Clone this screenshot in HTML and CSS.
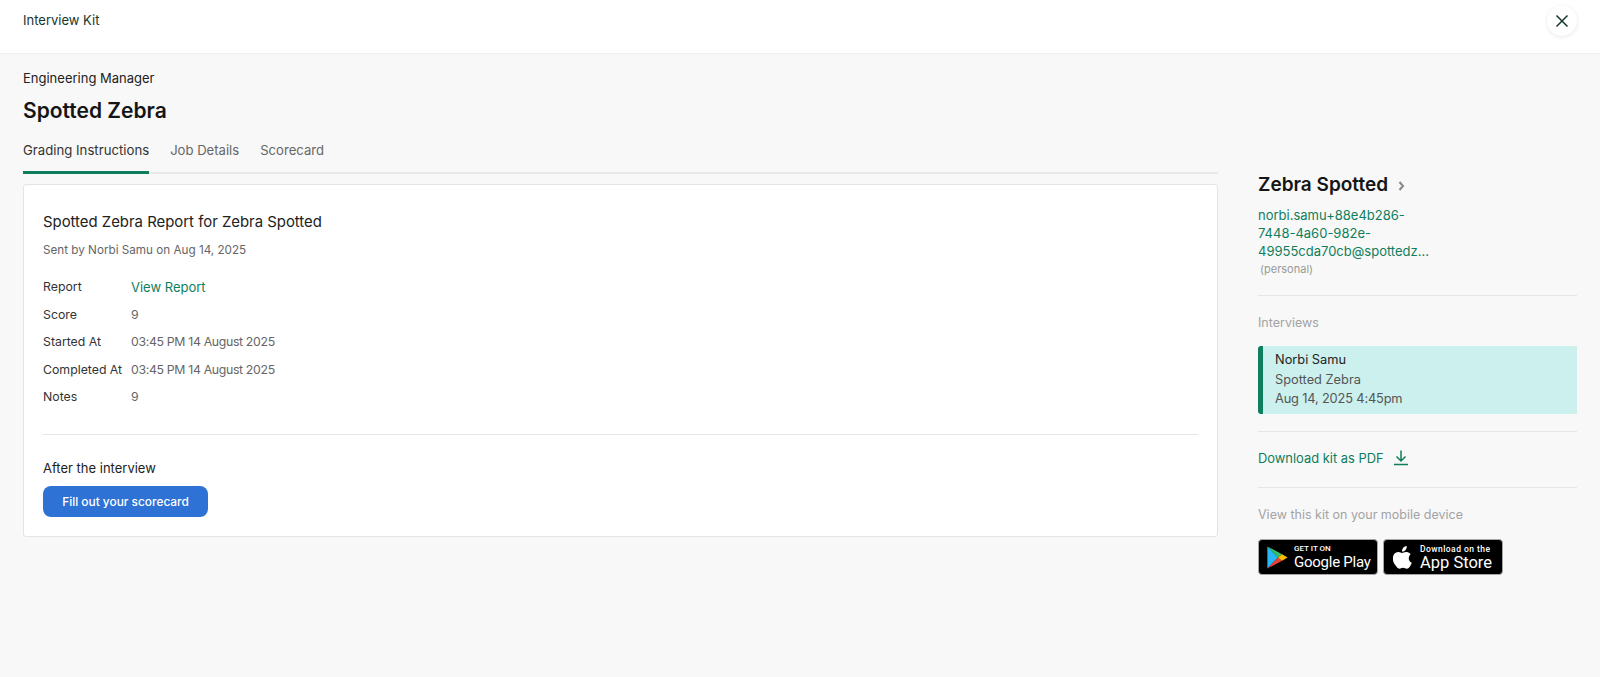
FILE: index.html
```html
<!DOCTYPE html>
<html>
<head>
   <title>Interview Kit</title>
   <link rel="stylesheet" href="styles.css">
</head>
<body>
   <header class="top-bar">
       <span class="top-title">Interview Kit</span>
       <button class="close-button" type="button" aria-label="Close">
           <svg width="14" height="14" viewBox="0 0 14 14"><path d="M1.5 1.5l11 11M12.5 1.5l-11 11" stroke="#15372c" stroke-width="1.5" fill="none"/></svg>
       </button>
   </header>
   <div class="page">
       <main class="main-col">
           <div class="job-name">Engineering Manager</div>
           <h1 class="candidate-title">Spotted Zebra</h1>
           <nav class="tabs">
               <a class="tab active">Grading Instructions</a>
               <a class="tab">Job Details</a>
               <a class="tab">Scorecard</a>
           </nav>
           <section class="card">
               <h2 class="card-title">Spotted Zebra Report for Zebra Spotted</h2>
               <p class="sent-by">Sent by Norbi Samu on Aug 14, 2025</p>
               <div class="report-grid">
                   <span class="report-label">Report</span><a class="report-value link">View Report</a>
                   <span class="report-label">Score</span><span class="report-value">9</span>
                   <span class="report-label">Started At</span><span class="report-value">03:45 PM 14 August 2025</span>
                   <span class="report-label">Completed At</span><span class="report-value">03:45 PM 14 August 2025</span>
                   <span class="report-label">Notes</span><span class="report-value">9</span>
               </div>
               <hr class="divider card-divider">
               <div class="after-label">After the interview</div>
               <button class="primary-button" type="button">Fill out your scorecard</button>
           </section>
       </main>
       <aside class="side-col">
           <div class="person-name">Zebra Spotted
               <svg class="chevron" width="7" height="10" viewBox="0 0 7 10"><path d="M1.5 1l3.500 4-3.500 4" stroke="#888" stroke-width="2" fill="none"/></svg>
           </div>
           <a class="person-email link">norbi.samu+88e4b286-<br>7448-4a60-982e-<br>49955cda70cb@spottedz...</a>
           <div class="email-type">(personal)</div>
           <hr class="divider side-divider-first">
           <div class="side-label interviews-label">Interviews</div>
           <div class="interview-item">
               <div class="interviewer">Norbi Samu</div>
               <div>Spotted Zebra</div>
               <div class="interview-date">Aug 14, 2025 4:45pm</div>
           </div>
           <hr class="divider side-divider-second">
           <a class="download-link link">Download kit as PDF
               <svg width="16" height="16" viewBox="0 0 16 16"><path d="M8 0.500v10.500M3.500 6.500L8 11l4.500-4.500M1 14.500h14" stroke="#0f7e5c" stroke-width="1.5" fill="none"/></svg>
           </a>
           <hr class="divider side-divider-third">
           <div class="side-label mobile-label">View this kit on your mobile device</div>
           <div class="store-badges">
               <div class="store-badge">
                   <svg class="play-icon" width="21" height="23" viewBox="0 0 22 25">
                       <path d="M0 0.500L11.500 12.500L0 24.500Z" fill="#29b6f6"/>
                       <path d="M0 0.500L16 9L11.500 12.500Z" fill="#34c06b"/>
                       <path d="M0 24.500L16 16L11.500 12.500Z" fill="#ea4335"/>
                       <path d="M16 9L22 12.500L16 16L11.500 12.500Z" fill="#fbbc04"/>
                   </svg>
                   <div class="badge-text play-text">
                       <span class="badge-small">GET IT ON</span>
                       <span class="badge-large">Google Play</span>
                   </div>
               </div>
               <div class="store-badge">
                   <svg class="apple-icon" width="19" height="23" viewBox="0 0 20 24"><path d="M14.500 0c.15 1.600-.45 3-1.300 4-.9 1.050-2.300 1.850-3.700 1.750-.2-1.500.5-3 1.300-3.900C11.700.800 13.200.100 14.500 0zM19.300 8.100c-.2.120-2.700 1.550-2.700 4.600 0 3.500 3.100 4.750 3.200 4.800-.03.100-.5 1.700-1.650 3.350-1 1.450-2.050 2.900-3.650 2.900-1.600.03-2.100-.93-3.900-.93-1.850 0-2.400.9-3.900.96-1.550.06-2.750-1.570-3.750-3C.2 17.800-1.300 12.700.800 9.200 1.830 7.450 3.700 6.350 5.700 6.320c1.520-.03 2.950 1 3.900 1 .94 0 2.600-1.250 4.500-1.060.8.030 3.030.320 4.470 2.200z" fill="#fff"/></svg>
                   <div class="badge-text apple-text">
                       <span class="badge-small">Download on the</span>
                       <span class="badge-large">App Store</span>
                   </div>
               </div>
           </div>
       </aside>
   </div>
</body>
</html>
```

FILE: styles.css
```css
* {
    box-sizing: border-box;
}
html, body {
    height: 100%;
}
body {
    margin: 0;
    background-color: #f8f8f8;
    color: #222;
    font-family: Inter, "Liberation Sans", sans-serif;
    font-size: 13px;
}
.top-bar {
    height: 54px;
    background: white;
    border-bottom: 1px solid #eeeeee;
    display: flex;
    justify-content: space-between;
    padding: 5px 23px 0;
}
.top-title {
    font-size: 13px;
    color: #15372c;
    line-height: 30px;
}
.close-button {
    width: 30px;
    height: 30px;
    margin-top: 1px;
    border: none;
    border-radius: 50%;
    background: white;
    box-shadow: 0 1px 4px rgba(0, 0, 0, 0.1);
    display: flex;
    align-items: center;
    justify-content: center;
    padding: 0;
}
.page {
    display: flex;
    padding: 0 23px;
}
.main-col {
    width: 1195px;
}
.job-name {
    margin-top: 15px;
    line-height: 18px;
    font-size: 13px;
    color: #222;
}
.candidate-title {
    margin: 9px 0 0;
    font-size: 21px;
    line-height: 30px;
    font-weight: 600;
    color: #151515;
}
.tabs {
    display: flex;
    gap: 21px;
    margin-top: 14px;
    height: 34px;
    border-bottom: 2px solid #e8e8e8;
}
.tab {
    font-size: 13.100px;
    line-height: 20px;
    height: 34px;
    color: #666;
}
.tab.active {
    font-size: 13.200px;
    color: #333;
    border-bottom: 3px solid #0f7e5c;
}
.card {
    margin-top: 10px;
    height: 353px;
    background: white;
    border: 1px solid #e4e4e4;
    border-radius: 3px;
    padding: 27px 19px 0;
}
.card-title {
    margin: 0;
    font-size: 14.900px;
    line-height: 20px;
    font-weight: 400;
    color: #222;
}
.sent-by {
    margin: 10px 0 0;
    font-size: 11.700px;
    line-height: 16px;
    color: #666;
}
.report-grid {
    display: grid;
    grid-template-columns: 88px 1fr;
    grid-auto-rows: 27.500px;
    margin-top: 15px;
    align-items: center;
    font-size: 12.300px;
}
.report-label {
    color: #333;
}
.report-value {
    color: #666;
    letter-spacing: -0.33px;
}
.report-value.link {
    color: #0f7e5c;
    font-size: 13px;
    letter-spacing: 0;
}
.link {
    color: #0f7e5c;
}
.divider {
    border: none;
    border-top: 1px solid #e5e5e5;
    margin: 0;
}
.card-divider {
    margin-top: 23px;
}
.after-label {
    margin-top: 23px;
    line-height: 20px;
    font-size: 13px;
    color: #222;
}
.primary-button {
    display: block;
    margin-top: 8px;
    width: 165px;
    height: 31px;
    border: none;
    border-radius: 8px;
    background-color: #2f72d6;
    color: white;
    font-family: inherit;
    font-size: 11.900px;
    font-weight: 500;
    padding: 0;
}
.side-col {
    width: 319px;
    margin-left: 40px;
}
.person-name {
    margin-top: 119px;
    font-size: 19px;
    line-height: 24px;
    font-weight: 600;
    color: #151515;
}
.chevron {
    margin-left: 5px;
}
.person-email {
    display: block;
    margin-top: 9px;
    font-size: 13px;
    line-height: 18px;
}
.email-type {
    margin-top: 1px;
    padding-left: 2px;
    font-size: 11px;
    line-height: 16px;
    color: #999;
}
.side-divider-first {
    margin-top: 18px;
}
.side-label {
    font-size: 12.500px;
    line-height: 18px;
    color: #a3a3a3;
}
.interviews-label {
    margin-top: 18px;
}
.interview-item {
    margin-top: 14px;
    height: 68px;
    padding: 4px 10px 0 12px;
    background-color: #cbf0ed;
    border-left: 5px solid #0f7e5c;
    border-radius: 3px 0 0 3px;
    font-size: 12.800px;
    line-height: 19.500px;
    color: #555;
}
.interviewer {
    color: #222;
}
.interview-date {
    letter-spacing: -0.15px;
}
.side-divider-second {
    margin-top: 17px;
}
.download-link {
    display: flex;
    align-items: center;
    gap: 9px;
    height: 20px;
    margin-top: 16px;
    font-size: 12.900px;
}
.side-divider-third {
    margin-top: 19px;
}
.mobile-label {
    margin-top: 18px;
}
.store-badges {
    display: flex;
    gap: 5px;
    margin-top: 15px;
}
.store-badge {
    width: 120px;
    height: 36px;
    flex-shrink: 0;
    background: black;
    border: 1px solid #a6a6a6;
    border-radius: 4px;
    display: flex;
    align-items: center;
    padding-left: 8px;
    color: white;
}
.store-badge svg {
    flex-shrink: 0;
}
.apple-icon {
    margin-left: 1px;
}
.badge-text {
    display: flex;
    flex-direction: column;
    white-space: nowrap;
    font-family: Roboto, "Liberation Sans", sans-serif;
}
.play-text {
    margin-left: 6px;
}
.apple-text {
    margin-left: 8px;
}
.badge-small {
    font-size: 8.500px;
    line-height: 10px;
    font-weight: 500;
}
.badge-large {
    font-size: 16.500px;
    line-height: 17px;
    font-weight: 400;
}
.play-text .badge-small {
    font-size: 8px;
}
.play-text .badge-large {
    font-size: 15px;
    letter-spacing: -0.25px;
}
.apple-text .badge-small {
    letter-spacing: 0.45px;
}
```
